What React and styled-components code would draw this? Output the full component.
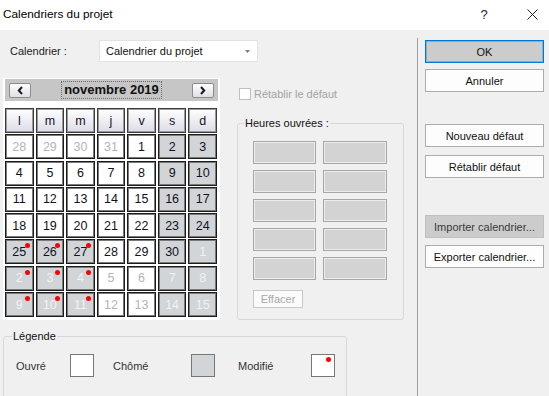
import React from "react";
import styled, { createGlobalStyle } from "styled-components";

const Global = createGlobalStyle`
  html, body { margin: 0; padding: 0; background: #f0f0f0; }
  * { box-sizing: border-box; }
`;

const Window = styled.div`
  width: 549px;
  height: 396px;
  overflow: hidden;
  font-family: "Liberation Sans", Arial, sans-serif;
  font-size: 11px;
  color: #000;
  background: #f0f0f0;
  display: flex;
  flex-direction: column;
`;

const TitleBar = styled.div`
  height: 30px;
  flex: none;
  background: #fff;
  display: flex;
  align-items: center;
  padding: 0 5px 2px 3px;
`;

const Title = styled.div`
  flex: 1;
  font-size: 11.8px;
  color: #000;
`;

const TitleBtn = styled.div`
  width: 24px;
  display: flex;
  justify-content: center;
  align-items: center;
  font-size: 13px;
  color: #222;
  margin-left: ${(p) => p.$gap || 0}px;
`;

const Body = styled.div`
  flex: 1;
  display: flex;
  min-height: 0;
`;

const LeftPane = styled.div`
  width: 417px;
  flex: none;
  padding: 10px 0 0 3px;
  display: flex;
  flex-direction: column;
`;

const Separator = styled.div`
  width: 1px;
  flex: none;
  margin-top: 8px;
  background: #a0a0a0;
`;

const RightPane = styled.div`
  flex: none;
  width: 127px;
  padding: 10px 0 0 7px;
  display: flex;
  flex-direction: column;
`;

const CalRow = styled.div`
  display: flex;
  align-items: center;
  height: 22px;
`;

const FieldLabel = styled.div`
  width: 96px;
  padding-left: 7px;
  color: #222;
`;

const Combo = styled.div`
  width: 159px;
  height: 22px;
  background: #fff;
  border: 1px solid #e2e2e2;
  display: flex;
  align-items: center;
  justify-content: space-between;
  padding: 0 7px 0 6px;
  color: #111;
`;

const MainRow = styled.div`
  display: flex;
  margin-top: 16px;
  align-items: flex-start;
`;

const CalendarPanel = styled.div`
  width: 217px;
  height: 242px;
  background: #fff;
  padding: 1px 2px 0 2px;
  flex: none;
`;

const MonthBar = styled.div`
  height: 22px;
  width: 213px;
  background: #c6c6c6;
  display: flex;
  align-items: center;
  justify-content: space-between;
  padding: 0 4px;
`;

const NavButton = styled.div`
  width: 22px;
  height: 15px;
  border: 1px solid #8c8c8c;
  border-radius: 2px;
  background: linear-gradient(#ffffff, #dedee6);
  display: flex;
  align-items: center;
  justify-content: center;
`;

const MonthTitle = styled.div`
  font-weight: bold;
  font-size: 13px;
  height: 18px;
  line-height: 16px;
  padding: 0 2px;
  border: 1px dotted #6a6a6a;
  color: #111;
`;

const DayGrid = styled.div`
  margin-top: 7px;
  width: 212px;
  display: grid;
  grid-template-columns: repeat(7, 1fr);
  grid-auto-rows: 25px;
  column-gap: 2px;
  row-gap: 1.3px;
`;

const HeadCell = styled.div`
  border: 1px solid #3c3c3c;
  box-shadow: inset 0 0 0 1px #9a9a9a;
  background: linear-gradient(#ffffff, #dcdce8);
  display: flex;
  align-items: center;
  justify-content: center;
  font-size: 12.5px;
  color: #141428;
`;

const DayCell = styled.div`
  position: relative;
  border: 1px solid #1c1c1c;
  box-shadow: inset 0 0 0 1px #7a7a7a;
  background: ${(p) => (p.$off ? "#d1d5d8" : "#ffffff")};
  display: flex;
  align-items: center;
  justify-content: center;
  font-size: 12.5px;
  color: ${(p) => (p.$muted ? (p.$off ? "#f2f2f2" : "#b4b4b4") : "#111122")};
`;

const ModDot = styled.span`
  position: absolute;
  top: 3px;
  right: 3px;
  width: 5px;
  height: 5px;
  border-radius: 50%;
  background: #ff0000;
`;

const SideCol = styled.div`
  margin-left: 17px;
  width: 167px;
  display: flex;
  flex-direction: column;
`;

const CheckRow = styled.div`
  margin-top: 10px;
  padding-left: 2px;
  display: flex;
  align-items: center;
  height: 12px;
  color: #a3a3a3;
`;

const CheckBox = styled.span`
  width: 12px;
  height: 12px;
  border: 1px solid #c0c0c0;
  background: #fff;
  margin-right: 3px;
`;

const Group = styled.fieldset`
  margin: ${(p) => p.$top || 0}px 0 0 0;
  width: ${(p) => p.$w}px;
  height: ${(p) => (p.$h ? `${p.$h}px` : "auto")};
  border: 1px solid #d8d8d8;
  border-radius: 3px;
  padding: 0 ${(p) => p.$pr || 0}px ${(p) => p.$pb || 0}px ${(p) => p.$pl || 0}px;
  min-width: 0;
  flex: none;
`;

const GroupLegend = styled.legend`
  margin-left: ${(p) => p.$ml || 0}px;
  padding: 0 1px;
  line-height: 14px;
  font-size: 11px;
  color: #111;
`;

const HoursGrid = styled.div`
  margin-top: 11px;
  display: grid;
  grid-template-columns: 63px 64px;
  grid-auto-rows: 23px;
  column-gap: 7px;
  row-gap: 6px;
`;

const HourBox = styled.div`
  background: #d3d3d3;
  border: 1px solid #a6a6a6;
  box-shadow: inset 0 0 0 1px #ececec;
`;

const SmallButton = styled.div`
  margin-top: 10px;
  width: 50px;
  height: 18px;
  border: 1px solid #c8c8c8;
  background: #fbfbfb;
  color: #a8a8a8;
  display: flex;
  align-items: center;
  justify-content: center;
`;

const LegendRow = styled.div`
  margin-top: 11px;
  display: grid;
  grid-template-columns: 97px 125px auto;
  align-items: center;
`;

const LegendItem = styled.div`
  display: flex;
  align-items: center;
`;

const LegendText = styled.span`
  width: ${(p) => p.$w}px;
  color: #333;
`;

const Swatch = styled.span`
  position: relative;
  width: 24px;
  height: 23px;
  border: 1px solid #777;
  background: ${(p) => p.$bg};
`;

const SwatchDot = styled.span`
  position: absolute;
  top: 2px;
  right: 3px;
  width: 5px;
  height: 5px;
  border-radius: 50%;
  background: #ff0000;
`;

const Button = styled.div`
  margin-top: ${(p) => p.$mt || 0}px;
  width: 119px;
  height: 23px;
  border: 1px solid ${(p) => (p.$default ? "#0078d7" : p.$gray ? "#bfbfbf" : "#adadad")};
  box-shadow: ${(p) => (p.$default ? "inset 0 0 0 1px rgba(0,120,215,0.35)" : "none")};
  background: ${(p) => (p.$default || p.$gray ? "#cccccc" : "#fdfdfd")};
  color: ${(p) => (p.$gray ? "#3a3a3a" : "#111")};
  display: flex;
  align-items: center;
  justify-content: center;
  font-size: 11px;
`;

const Chevron = ({ dir }) => (
  <svg width="7" height="9" viewBox="0 0 7 9">
    <path
      d={dir === "left" ? "M5 1 L1.8 4.5 L5 8" : "M2 1 L5.2 4.5 L2 8"}
      fill="none"
      stroke="#1a1a1a"
      strokeWidth="2"
    />
  </svg>
);

const days = [
  // [label, off, muted, dot]
  [28, 0, 1, 0], [29, 0, 1, 0], [30, 0, 1, 0], [31, 0, 1, 0], [1, 0, 0, 0], [2, 1, 0, 0], [3, 1, 0, 0],
  [4, 0, 0, 0], [5, 0, 0, 0], [6, 0, 0, 0], [7, 0, 0, 0], [8, 0, 0, 0], [9, 1, 0, 0], [10, 1, 0, 0],
  [11, 0, 0, 0], [12, 0, 0, 0], [13, 0, 0, 0], [14, 0, 0, 0], [15, 0, 0, 0], [16, 1, 0, 0], [17, 1, 0, 0],
  [18, 0, 0, 0], [19, 0, 0, 0], [20, 0, 0, 0], [21, 0, 0, 0], [22, 0, 0, 0], [23, 1, 0, 0], [24, 1, 0, 0],
  [25, 1, 0, 1], [26, 1, 0, 1], [27, 1, 0, 1], [28, 0, 0, 0], [29, 0, 0, 0], [30, 1, 0, 0], [1, 1, 1, 0],
  [2, 1, 1, 1], [3, 1, 1, 1], [4, 1, 1, 1], [5, 0, 1, 0], [6, 0, 1, 0], [7, 1, 1, 0], [8, 1, 1, 0],
  [9, 1, 1, 1], [10, 1, 1, 1], [11, 1, 1, 1], [12, 0, 1, 0], [13, 0, 1, 0], [14, 1, 1, 0], [15, 1, 1, 0],
];

const heads = ["l", "m", "m", "j", "v", "s", "d"];

export default function App() {
  return (
    <>
      <Global />
      <Window>
        <TitleBar>
          <Title>Calendriers du projet</Title>
          <TitleBtn>?</TitleBtn>
          <TitleBtn $gap={24}>
            <svg width="11" height="11" viewBox="0 0 11 11">
              <path d="M0.5 0.5 L10.5 10.5 M10.5 0.5 L0.5 10.5" stroke="#222" strokeWidth="1" />
            </svg>
          </TitleBtn>
        </TitleBar>
        <Body>
          <LeftPane>
            <CalRow>
              <FieldLabel>Calendrier :</FieldLabel>
              <Combo>
                <span>Calendrier du projet</span>
                <svg width="5" height="3" viewBox="0 0 5 3">
                  <path d="M0 0 L5 0 L2.5 3 Z" fill="#7a7a7a" />
                </svg>
              </Combo>
            </CalRow>
            <MainRow>
              <CalendarPanel>
                <MonthBar>
                  <NavButton><Chevron dir="left" /></NavButton>
                  <MonthTitle>novembre 2019</MonthTitle>
                  <NavButton><Chevron dir="right" /></NavButton>
                </MonthBar>
                <DayGrid>
                  {heads.map((h, i) => (
                    <HeadCell key={"h" + i}>{h}</HeadCell>
                  ))}
                  {days.map(([n, off, muted, dot], i) => (
                    <DayCell key={i} $off={!!off} $muted={!!muted}>
                      {n}
                      {dot ? <ModDot /> : null}
                    </DayCell>
                  ))}
                </DayGrid>
              </CalendarPanel>
              <SideCol>
                <CheckRow>
                  <CheckBox />
                  <span>Rétablir le défaut</span>
                </CheckRow>
                <Group $top={16} $w={167} $pl={15} $pb={11}>
                  <GroupLegend $ml={-9}>Heures ouvrées :</GroupLegend>
                  <HoursGrid>
                    {Array.from({ length: 10 }).map((_, i) => (
                      <HourBox key={i} />
                    ))}
                  </HoursGrid>
                  <SmallButton>Effacer</SmallButton>
                </Group>
              </SideCol>
            </MainRow>
            <Group $top={9} $w={344} $h={80} $pl={12}>
              <GroupLegend $ml={-4}>Légende</GroupLegend>
              <LegendRow>
                <LegendItem>
                  <LegendText $w={54}>Ouvré</LegendText>
                  <Swatch $bg="#ffffff" />
                </LegendItem>
                <LegendItem>
                  <LegendText $w={78}>Chômé</LegendText>
                  <Swatch $bg="#d1d5d8" />
                </LegendItem>
                <LegendItem>
                  <LegendText $w={73}>Modifié</LegendText>
                  <Swatch $bg="#ffffff">
                    <SwatchDot />
                  </Swatch>
                </LegendItem>
              </LegendRow>
            </Group>
          </LeftPane>
          <Separator />
          <RightPane>
            <Button $default>OK</Button>
            <Button $mt={6}>Annuler</Button>
            <Button $mt={32}>Nouveau défaut</Button>
            <Button $mt={8}>Rétablir défaut</Button>
            <Button $mt={37} $gray>Importer calendrier...</Button>
            <Button $mt={7}>Exporter calendrier...</Button>
          </RightPane>
        </Body>
      </Window>
    </>
  );
}
